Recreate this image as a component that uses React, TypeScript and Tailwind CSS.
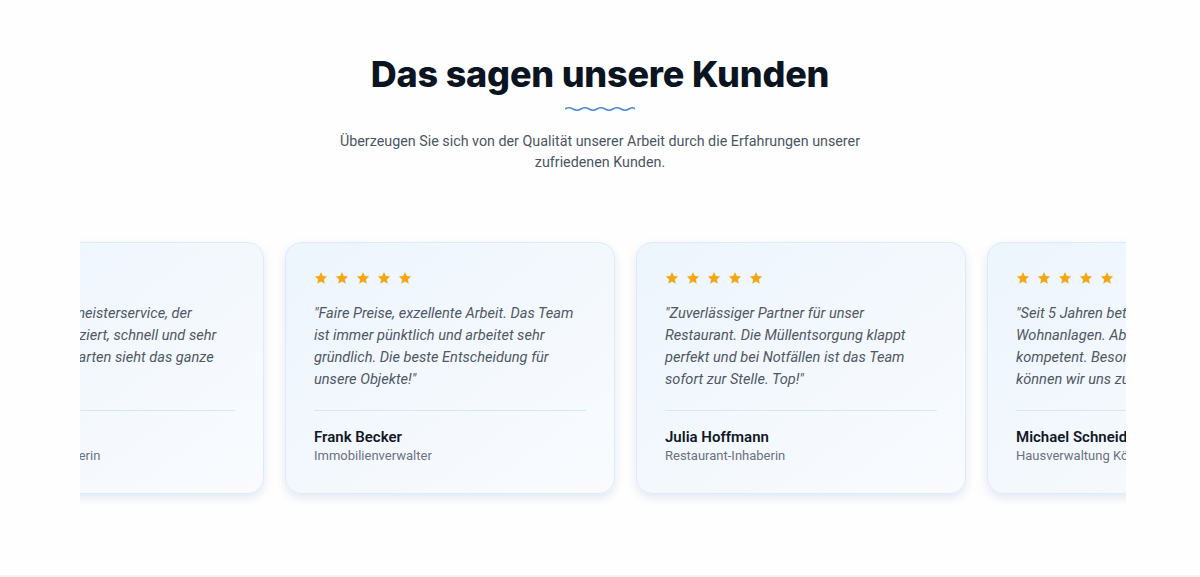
import React from "react";

type T = { lines: string[]; name: string; role: string };

const items: T[] = [
  {
    lines: [
      "\"Exzellenter Hausmeisterservice, der",
      "Personal ist qualifiziert, schnell und sehr",
      "gründlich. Unser Garten sieht das ganze",
      "Jahr top aus!\"",
    ],
    name: "Anna Weber",
    role: "Wohnungseigentümerin",
  },
  {
    lines: [
      "\"Faire Preise, exzellente Arbeit. Das Team",
      "ist immer pünktlich und arbeitet sehr",
      "gründlich. Die beste Entscheidung für",
      "unsere Objekte!\"",
    ],
    name: "Frank Becker",
    role: "Immobilienverwalter",
  },
  {
    lines: [
      "\"Zuverlässiger Partner für unser",
      "Restaurant. Die Müllentsorgung klappt",
      "perfekt und bei Notfällen ist das Team",
      "sofort zur Stelle. Top!\"",
    ],
    name: "Julia Hoffmann",
    role: "Restaurant-Inhaberin",
  },
  {
    lines: [
      "\"Seit 5 Jahren betreuen sie unsere",
      "Wohnanlagen. Absolut zuverlässig und",
      "kompetent. Besonders im Winterdienst",
      "können wir uns zu 100% verlassen.\"",
    ],
    name: "Michael Schneider",
    role: "Hausverwaltung Köln",
  },
];

function Star() {
  return (
    <svg width="14" height="14" viewBox="0 0 24 24" className="shrink-0">
      <path
        d="M12 1.8l3.1 6.9 7.4.8-5.6 5 1.6 7.4L12 18.1l-6.5 3.8 1.6-7.4-5.6-5 7.4-.8z"
        fill="#f3a712"
      />
    </svg>
  );
}

function Card({ t }: { t: T }) {
  return (
    <div className="w-[330px] shrink-0 rounded-[16px] border border-[#dcebf9] bg-gradient-to-br from-[#edf5fd] to-[#f9fbfe] px-[28px] pt-[28px] pb-[28px] shadow-[0_4px_10px_rgba(30,64,120,0.12)]">
      <div className="flex gap-[7px]">
        <Star />
        <Star />
        <Star />
        <Star />
        <Star />
      </div>
      <p className="mt-[17px] text-[14.6px] italic leading-[22px] text-[#505864] whitespace-nowrap">
        {t.lines.map((l, i) => (
          <span key={i} className="block">
            {l}
          </span>
        ))}
      </p>
      <div className="mt-[20px] border-t border-[#d3e8f8] pt-[16px]">
        <div className="text-[15px] font-semibold leading-[20px] text-[#111827]">{t.name}</div>
        <div className="text-[13px] leading-[18px] text-[#6b7280]">{t.role}</div>
      </div>
    </div>
  );
}

export default function App() {
  return (
    <div className="min-h-[577px] w-full bg-white" style={{ fontFamily: "Roboto, 'Noto Sans', sans-serif" }}>
      <section className="h-[575px] w-full bg-[#fefefe] pt-[50px]">
        <h2
          className="text-center text-[36px] font-extrabold leading-[48px] tracking-[-0.2px] text-[#0b1421]"
          style={{ fontFamily: "Inter, sans-serif" }}
        >
          Das sagen unsere Kunden
        </h2>
        <div className="mt-[8px] flex justify-center">
          <svg width="70" height="6" viewBox="0 0 70 6">
            <path
              d="M0 3 Q 4 0.5 8 3 T 16 3 T 24 3 T 32 3 T 40 3 T 48 3 T 56 3 T 64 3 T 70 3"
              fill="none"
              stroke="#4a8fd6"
              strokeWidth="1.6"
            />
          </svg>
        </div>
        <p className="mx-auto mt-[19px] w-[600px] text-center text-[14.3px] leading-[21px] text-[#4b5563]">
          Überzeugen Sie sich von der Qualität unserer Arbeit durch die Erfahrungen unserer
          <br />
          zufriedenen Kunden.
        </p>
        <div className="mx-[80px] mt-[58px] w-[1046px] overflow-hidden py-[11px]">
          <div className="-ml-[146px] flex gap-[21px]">
            {items.map((t, i) => (
              <Card key={i} t={t} />
            ))}
          </div>
        </div>
      </section>
      <div className="h-[2px] bg-[#f3f4f6]" />
    </div>
  );
}
